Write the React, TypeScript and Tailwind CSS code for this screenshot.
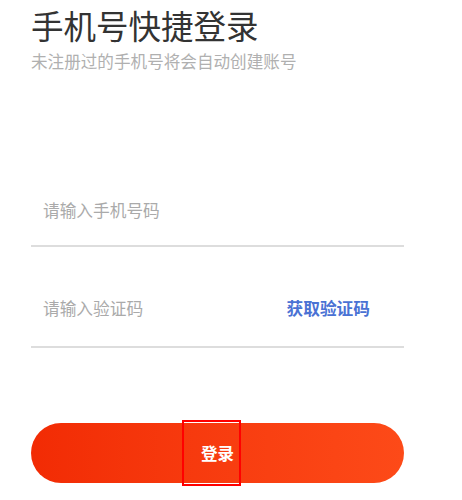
export default function App() {
  return (
    <div
      className="w-[462px] h-[500px] bg-white overflow-hidden"
      style={{ fontFamily: '"Noto Sans CJK SC", "Noto Sans", sans-serif' }}
    >
      <div className="pl-[31px] w-[404px] pt-[5px]">
        {/* Header */}
        <h1 className="text-[32.5px] leading-[40px] text-[#333333] font-normal">手机号快捷登录</h1>
        <p className="mt-[6px] text-[16.6px] leading-[20px] text-[#b0b0b0]">未注册过的手机号将会自动创建账号</p>

        {/* Phone */}
        <div className="mt-[105px] h-[71px] flex items-center pl-[12px] border-b-2 border-[#dddddd]">
          <span className="text-[16.7px] text-[#aaaaaa]">请输入手机号码</span>
        </div>

        {/* Code */}
        <div className="mt-[25px] h-[76px] flex items-center justify-between pl-[12px] pr-[34px] border-b-2 border-[#dddddd]">
          <span className="text-[16.7px] text-[#aaaaaa]">请输入验证码</span>
          <span className="text-[16.7px] font-bold text-[#4a72d4]">获取验证码</span>
        </div>

        {/* Login button */}
        <button className="mt-[75px] w-full h-[60px] rounded-full bg-gradient-to-r from-[#f22b04] to-[#fd4a18] flex items-center justify-center">
          <span className="relative text-[16.5px] leading-[22px] font-bold text-white">
            登录
            <span className="absolute left-[-19px] right-[-7px] top-[-22px] bottom-[-22px] border-2 border-[#ff0000]" />
          </span>
        </button>
      </div>
    </div>
  );
}
